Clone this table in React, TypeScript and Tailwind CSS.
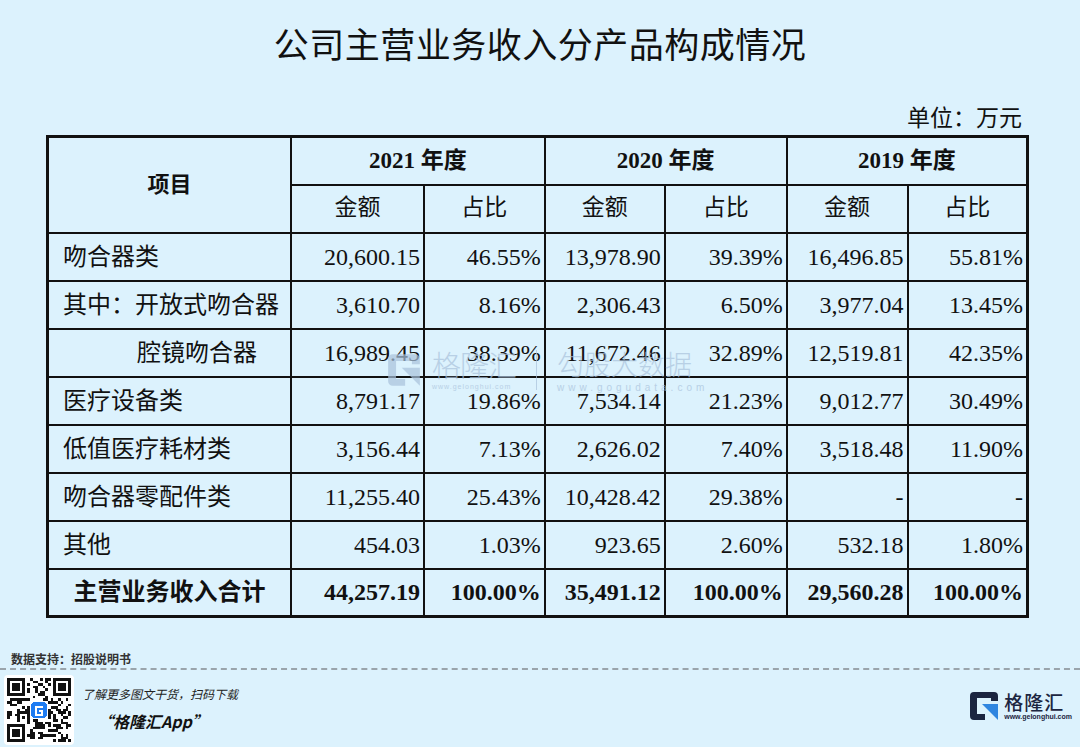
import React from "react";

const rows = [
  { label: "吻合器类", v: ["20,600.15", "46.55%", "13,978.90", "39.39%", "16,496.85", "55.81%"] },
  { label: "其中：开放式吻合器", v: ["3,610.70", "8.16%", "2,306.43", "6.50%", "3,977.04", "13.45%"] },
  { label: "腔镜吻合器", indent: true, v: ["16,989.45", "38.39%", "11,672.46", "32.89%", "12,519.81", "42.35%"] },
  { label: "医疗设备类", v: ["8,791.17", "19.86%", "7,534.14", "21.23%", "9,012.77", "30.49%"] },
  { label: "低值医疗耗材类", v: ["3,156.44", "7.13%", "2,626.02", "7.40%", "3,518.48", "11.90%"] },
  { label: "吻合器零配件类", v: ["11,255.40", "25.43%", "10,428.42", "29.38%", "-", "-"] },
  { label: "其他", v: ["454.03", "1.03%", "923.65", "2.60%", "532.18", "1.80%"] },
];

const total = ["44,257.19", "100.00%", "35,491.12", "100.00%", "29,560.28", "100.00%"];

const serif = "font-['Liberation_Serif','Noto_Sans_CJK_SC',serif]";

function QrCode() {
  // deterministic pseudo-random modules
  const n = 25;
  const cells: JSX.Element[] = [];
  let seed = 7;
  const rnd = () => {
    seed = (seed * 9301 + 49297) % 233280;
    return seed / 233280;
  };
  const inFinder = (x: number, y: number) =>
    (x < 8 && y < 8) || (x > n - 9 && y < 8) || (x < 8 && y > n - 9);
  for (let y = 0; y < n; y++) {
    for (let x = 0; x < n; x++) {
      if (inFinder(x, y)) continue;
      if (x >= 9 && x <= 15 && y >= 9 && y <= 15) continue;
      if (rnd() > 0.5) cells.push(<rect key={`${x}-${y}`} x={x} y={y} width={1} height={1} fill="#111" />);
    }
  }
  const finder = (fx: number, fy: number) => (
    <g key={`f${fx}${fy}`}>
      <rect x={fx} y={fy} width={7} height={7} fill="#111" />
      <rect x={fx + 1} y={fy + 1} width={5} height={5} fill="#fff" />
      <rect x={fx + 2} y={fy + 2} width={3} height={3} fill="#111" />
    </g>
  );
  return (
    <svg width="64" height="64" viewBox="0 0 25 25" shapeRendering="crispEdges">
      <rect width="25" height="25" fill="#fff" />
      {cells}
      {finder(0, 0)}
      {finder(18, 0)}
      {finder(0, 18)}
      <rect x="9.5" y="9.5" width="6" height="6" rx="1" fill="#1e7cf2" />
      <path d="M11 11h3v0.9h-2.1v2.2h1.2v-0.8h-0.6v-0.8h1.5v2.4H11z" fill="#fff" />
    </svg>
  );
}

function GLogo({ size = 30, dark = "#1b2540", blue = "#2f86e0" }: { size?: number; dark?: string; blue?: string }) {
  return (
    <svg width={size} height={size} viewBox="0 0 30 30">
      <path d="M5 1h20a4 4 0 0 1 4 4v5h-7V7H8v16h8v6H5a4 4 0 0 1-4-4V5a4 4 0 0 1 4-4z" fill={dark} />
      <path d="M13 13h16v16z" fill={blue} />
    </svg>
  );
}

export default function App() {
  return (
    <div className="relative w-[1080px] h-[747px] overflow-hidden bg-[#dcf2fd] text-[#111] font-['Noto_Sans_CJK_SC',sans-serif]">
      <h1 className="pt-[21px] text-center text-[35px] leading-[44px] font-normal tracking-[0.5px]">
        公司主营业务收入分产品构成情况
      </h1>

      <div className={`mt-[40px] pr-[58px] text-right text-[23px] leading-[28px] ${serif}`}>单位：万元</div>

      <table className={`ml-[46px] mt-[2px] w-[983px] border-collapse border-[3px] border-[#111] text-[23px] ${serif}`}>
        <colgroup>
          <col className="w-[244px]" />
          <col className="w-[133px]" />
          <col className="w-[121px]" />
          <col className="w-[120px]" />
          <col className="w-[122px]" />
          <col className="w-[121px]" />
          <col className="w-[120px]" />
        </colgroup>
        <thead>
          <tr className="h-[48px]">
            <th rowSpan={2} className="border-2 border-[#111] text-[22px] font-bold">项目</th>
            <th colSpan={2} className="border-2 border-[#111] font-bold">2021 年度</th>
            <th colSpan={2} className="border-2 border-[#111] font-bold">2020 年度</th>
            <th colSpan={2} className="border-2 border-[#111] font-bold">2019 年度</th>
          </tr>
          <tr className="h-[48px]">
            {["金额", "占比", "金额", "占比", "金额", "占比"].map((t, i) => (
              <th key={i} className="border-2 border-[#111] font-normal">{t}</th>
            ))}
          </tr>
        </thead>
        <tbody>
          {rows.map((r) => (
            <tr key={r.label} className="h-[48px]">
              <td className={`border-2 border-[#111] ${r.indent ? "pl-[88px]" : "pl-[14px]"} text-[24px]`}>{r.label}</td>
              {r.v.map((v, i) => (
                <td key={i} className="border-2 border-[#111] text-right pr-[3px] text-[24px]">{v}</td>
              ))}
            </tr>
          ))}
          <tr className="h-[48px]">
            <td className="border-2 border-[#111] text-center text-[24px] font-bold">主营业务收入合计</td>
            {total.map((v, i) => (
              <td key={i} className="border-2 border-[#111] text-right pr-[3px] text-[24px] font-bold">{v}</td>
            ))}
          </tr>
        </tbody>
      </table>

      {/* watermark */}
      <div className="pointer-events-none absolute left-[387px] top-[346px] flex items-start text-[#a9c2dc] opacity-70">
        <div className="mt-[7px]">
          <GLogo size={34} dark="#a9c2dc" blue="#a9c2dc" />
        </div>
        <div className="ml-[11px] flex flex-col">
          <span className="text-[29px] leading-[36px] font-light tracking-[-1px]">格隆汇</span>
          <span className="text-[7px] leading-[10px] tracking-[1px] font-['Liberation_Sans',sans-serif]">www.gelonghui.com</span>
        </div>
        <div className="ml-[20px] mt-[4px] h-[40px] w-[1px] bg-[#a9c2dc]" />
        <div className="ml-[20px] flex flex-col">
          <span className="text-[27px] leading-[36px] font-light">勾股大数据</span>
          <span className="text-[10px] leading-[12px] tracking-[4px] font-['Liberation_Sans',sans-serif]">www.gogudata.com</span>
        </div>
      </div>

      {/* footer */}
      <div className="absolute left-0 top-[651px] w-full">
        <div className="pl-[11px] text-[12px] leading-[16px] font-bold text-[#333]">数据支持：招股说明书</div>
        <div className="mt-[1px] border-t-2 border-dashed border-[#9aa4ab]" />
        <div className="mt-[5px] flex">
          <div className="ml-[4px] rounded-[4px] bg-white p-[3px]">
            <QrCode />
          </div>
          <div className="ml-[8px] flex flex-col">
            <span className="mt-[12px] text-[12px] leading-[14px] italic text-[#222]">了解更多图文干货，扫码下载</span>
            <span className="ml-[15px] mt-[10px] text-[16px] leading-[20px] font-bold italic text-[#111]">“格隆汇App”</span>
          </div>
          <div className="ml-auto mr-[8px] mt-[16px] flex items-start gap-[5px]">
            <GLogo size={30} />
            <div className="flex flex-col">
              <span className="text-[19px] leading-[21px] font-medium text-[#1b2540] tracking-[1px]">格隆汇</span>
              <span className="text-[7px] leading-[9px] font-bold text-[#1b2540] font-['Liberation_Sans',sans-serif]">www.gelonghui.com</span>
            </div>
          </div>
        </div>
      </div>
    </div>
  );
}
